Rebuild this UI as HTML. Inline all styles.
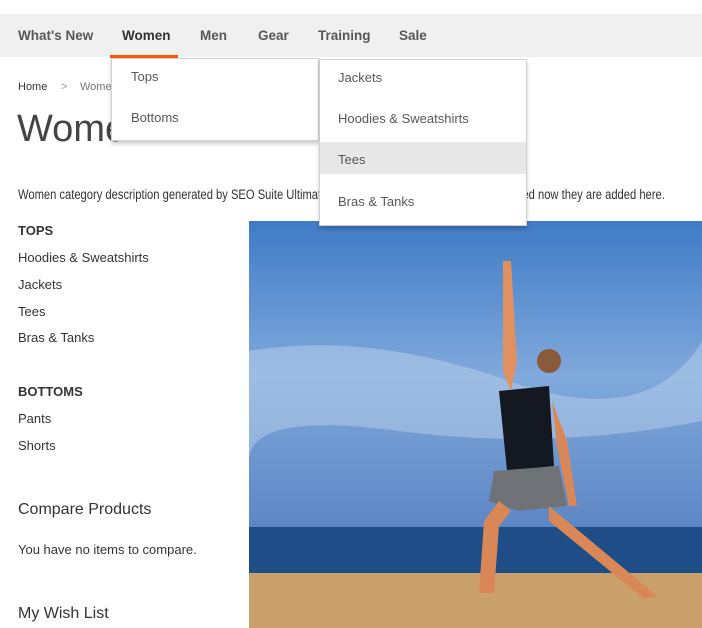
<!DOCTYPE html>
<html><head><meta charset="utf-8"><style>
*{margin:0;padding:0;box-sizing:border-box}
body{width:702px;height:628px;overflow:hidden;background:#fff;font-family:"Liberation Sans",sans-serif;color:#333;position:relative}
.a{position:absolute;white-space:nowrap}
.nav{position:absolute;left:0;top:14px;width:702px;height:43px;background:#f0f0f0}
.nav span{position:absolute;top:14px;font-size:13.5px;font-weight:bold;color:#575757}
.dd{position:absolute;background:#fff;border:1px solid #d1d1d1;box-shadow:0 3px 4px rgba(0,0,0,.2)}
.dd div{position:absolute;font-size:13px;color:#575757}
.t{font-size:13px;color:#333}
</style></head><body>
<div class="nav">
<span style="left:18px">What's New</span>
<span style="left:122px;color:#333">Women</span>
<span style="left:200px">Men</span>
<span style="left:258px">Gear</span>
<span style="left:318px">Training</span>
<span style="left:399px">Sale</span>
</div>
<div class="a" style="left:110px;top:55px;width:68px;height:3px;background:#ff5501"></div>
<div class="a" style="left:18px;top:81px;font-size:11px;color:#333">Home</div>
<div class="a" style="left:61px;top:81px;font-size:11px;color:#999">&gt;</div>
<div class="a" style="left:80px;top:81px;font-size:11px;color:#777">Women</div>
<div class="a" style="left:17px;top:108px;font-size:38px;color:#444">Women</div>
<div class="a t" style="left:18px;top:187px;font-size:13.4px;transform:scaleX(0.835);transform-origin:0 0">Women category description generated by SEO Suite Ultimate extension. As new categories are created now they are added here.</div>
<div class="a t" style="left:18px;top:223px;font-weight:bold">TOPS</div>
<div class="a t" style="left:18px;top:250px">Hoodies &amp; Sweatshirts</div>
<div class="a t" style="left:18px;top:277px">Jackets</div>
<div class="a t" style="left:18px;top:304px">Tees</div>
<div class="a t" style="left:18px;top:330px">Bras &amp; Tanks</div>
<div class="a t" style="left:18px;top:384px;font-weight:bold">BOTTOMS</div>
<div class="a t" style="left:18px;top:411px">Pants</div>
<div class="a t" style="left:18px;top:438px">Shorts</div>
<div class="a" style="left:18px;top:501px;font-size:16px">Compare Products</div>
<div class="a t" style="left:18px;top:542px">You have no items to compare.</div>
<div class="a" style="left:18px;top:605px;font-size:16px">My Wish List</div>
<svg class="a" style="left:249px;top:221px" width="453" height="407" viewBox="0 0 453 407">
<defs><linearGradient id="s" x1="0" y1="0" x2="0" y2="1"><stop offset="0" stop-color="#3f7bc6"/><stop offset=".5" stop-color="#80a9dc"/><stop offset="1" stop-color="#5d86c4"/></linearGradient></defs>
<rect width="453" height="307" fill="url(#s)"/>
<path d="M0 130Q120 110 260 160T453 120L453 200Q300 230 150 210T0 240Z" fill="#b9cfe9" opacity=".5"/>
<rect y="306" width="453" height="48" fill="#1f4d88"/>
<rect y="352" width="453" height="55" fill="#c9a06a"/>
<path d="M254 40L262 40L268 140L262 170L254 150Z" fill="#e0915f"/>
<circle cx="300" cy="140" r="12" fill="#8a5a3a"/>
<path d="M250 170L300 165L305 245L258 250Z" fill="#141820"/>
<path d="M245 250L310 245L318 285L270 290L240 280Z" fill="#6f7378"/>
<path d="M250 280L235 300L230 372L245 372L250 305L262 290Z" fill="#d98757"/>
<path d="M300 285L390 360L408 375L395 378L300 300Z" fill="#d98757"/>
<path d="M303 180L318 220L328 285L320 285L308 225Z" fill="#d98757"/>
</svg>
<div class="dd" style="left:111px;top:58px;width:208px;height:83px">
<div style="left:19px;top:10px">Tops</div>
<div style="left:19px;top:51px">Bottoms</div>
</div>
<div class="dd" style="left:319px;top:59px;width:208px;height:167px">
<div style="left:18px;top:10px">Jackets</div>
<div style="left:18px;top:51px">Hoodies &amp; Sweatshirts</div>
<div style="left:0;top:82px;width:206px;height:32px;background:#e8e8e8"></div>
<div style="left:18px;top:92px">Tees</div>
<div style="left:18px;top:134px">Bras &amp; Tanks</div>
</div>
</body></html>
